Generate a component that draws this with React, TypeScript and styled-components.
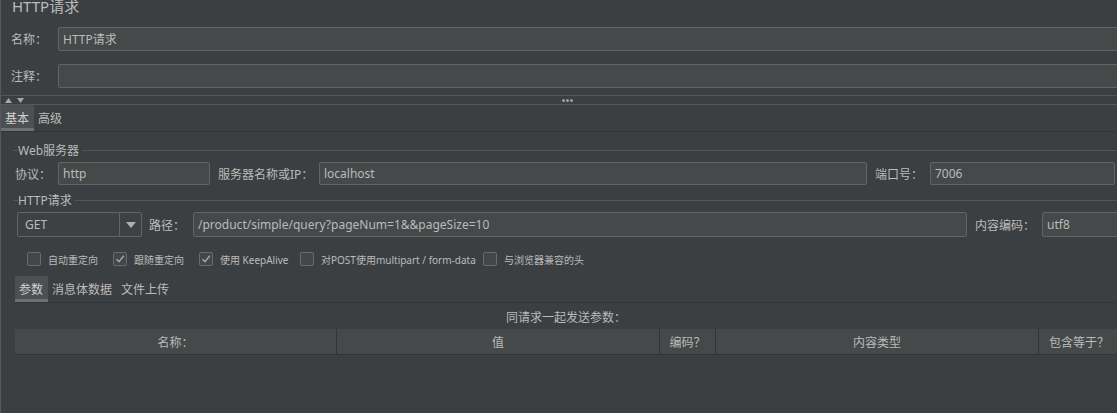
import styled, { createGlobalStyle } from "styled-components";

const GlobalStyle = createGlobalStyle`
  html, body {
    margin: 0;
    padding: 0;
    background: #3c3f41;
    overflow: hidden;
  }
  body {
    font-family: "Noto Sans", "Noto Sans CJK SC", sans-serif;
    font-size: 12px;
    color: #bbbbbb;
  }
  * { box-sizing: border-box; }
`;

const Page = styled.div`
  width: 1117px;
  height: 413px;
  background: #3c3f41;
  border-left: 1px solid #56595b;
  overflow: hidden;
`;

const Title = styled.div`
  margin-top: -2px;
  height: 29px;
  padding-left: 11px;
  font-size: 15px;
  line-height: 16px;
`;

const FormRow = styled.div<{ $mt?: number }>`
  display: flex;
  align-items: center;
  height: 24px;
  margin-top: ${({ $mt }) => $mt ?? 0}px;
  padding-left: 10px;
`;

const Label = styled.span<{ $w: number; $ml?: number }>`
  flex: none;
  width: ${({ $w }) => $w}px;
  margin-left: ${({ $ml }) => $ml ?? 0}px;
  white-space: nowrap;
`;

const Input = styled.div<{ $w?: number; $over?: boolean }>`
  ${({ $w }) => ($w ? `width: ${$w}px; flex: none;` : "flex: 1;")}
  height: 100%;
  margin-right: ${({ $over }) => ($over ? "-6px" : "0")};
  background: #45494a;
  border: 1px solid #646464;
  border-radius: 2px;
  padding: 0 4px;
  display: flex;
  align-items: center;
  white-space: nowrap;
  overflow: hidden;
  color: #bbbbbb;
`;

const Splitter = styled.div`
  margin-top: 7px;
  height: 10px;
  border-top: 1px solid #535658;
  border-bottom: 1px solid #56595b;
  display: grid;
  grid-template-columns: 1fr auto 1fr;
  align-items: center;
`;

const Arrows = styled.div`
  display: flex;
  gap: 5px;
  padding-left: 4px;
`;

const Dots = styled.div`
  display: flex;
  gap: 1px;
  padding-left: 16px;
`;

const Dot = styled.span`
  width: 3px;
  height: 3px;
  border-radius: 50%;
  background: #a0a0a0;
`;

const TabBar = styled.div<{ $ml?: number }>`
  display: flex;
  height: 27px;
  margin-left: ${({ $ml }) => $ml ?? 0}px;
  border-bottom: 1px solid #323436;
`;

const Tab = styled.div<{ $active?: boolean }>`
  height: 100%;
  padding: 2px 5px 0 4px;
  display: flex;
  align-items: center;
  font-size: 12px;
  background: ${({ $active }) => ($active ? "#4c5052" : "transparent")};
  border-bottom: 3px solid ${({ $active }) => ($active ? "#6e7174" : "transparent")};
  color: ${({ $active }) => ($active ? "#cfcfcf" : "#bbbbbb")};
`;

const GroupHead = styled.div<{ $mt: number }>`
  display: flex;
  align-items: center;
  height: 14px;
  margin-top: ${({ $mt }) => $mt}px;
  padding-left: 12px;
`;

const GroupLine = styled.span<{ $w?: number }>`
  height: 1px;
  background: #535658;
  ${({ $w }) => ($w ? `width: ${$w}px; flex: none;` : "flex: 1;")}
`;

const GroupTitle = styled.span`
  padding-right: 3px;
  white-space: nowrap;
`;

const FieldRow = styled.div<{ $h: number; $pl: number }>`
  display: flex;
  align-items: center;
  height: ${({ $h }) => $h}px;
  margin-top: 5px;
  padding-left: ${({ $pl }) => $pl}px;
`;

const Combo = styled.div`
  flex: none;
  width: 125px;
  height: 100%;
  border: 1px solid #646464;
  border-radius: 2px;
  background: #3e4143;
  display: flex;
`;

const ComboValue = styled.div`
  width: 102px;
  padding-left: 7px;
  display: flex;
  align-items: center;
  border-right: 1px solid #646464;
`;

const ComboArrow = styled.div`
  flex: 1;
  display: flex;
  align-items: center;
  justify-content: center;
`;

const CheckRow = styled.div`
  display: flex;
  align-items: center;
  height: 14px;
  margin-top: 15px;
  padding-left: 26px;
`;

const CheckItem = styled.div<{ $w?: number }>`
  flex: none;
  ${({ $w }) => ($w ? `width: ${$w}px;` : "")}
  display: flex;
  align-items: center;
  gap: 7px;
  font-size: 10px;
  white-space: nowrap;
`;

const Box = styled.span`
  flex: none;
  width: 14px;
  height: 14px;
  border: 1px solid #6b6b6b;
  border-radius: 2px;
  background: #43474a;
  display: flex;
  align-items: center;
  justify-content: center;
`;

const InnerTabs = styled(TabBar)`
  margin-top: 10px;
`;

const Caption = styled.div`
  margin-left: 14px;
  height: 26px;
  padding-top: 4px;
  line-height: 22px;
  text-align: center;
`;

const HeaderRow = styled.div`
  display: flex;
  margin-left: 14px;
  height: 26px;
  background: #45494a;
  border-bottom: 1px solid #323436;
`;

const HeaderCell = styled.div<{ $w?: number }>`
  ${({ $w }) => ($w ? `width: ${$w}px; flex: none;` : "flex: 1;")}
  display: flex;
  align-items: center;
  justify-content: center;
  border-right: 1px solid #323436;
  white-space: nowrap;
  &:last-child { border-right: none; justify-content: flex-start; padding-left: 10px; }
`;

const Triangle = ({ up, color = "#a8a8a8" }: { up?: boolean; color?: string }) => (
  <svg width="7" height="5" viewBox="0 0 7 5">
    <path d={up ? "M0 5 L3.5 0 L7 5 Z" : "M0 0 L3.5 5 L7 0 Z"} fill={color} />
  </svg>
);

const Check = () => (
  <svg width="10" height="10" viewBox="0 0 10 10">
    <path d="M1.5 5.2 L4 7.8 L8.8 1.8" fill="none" stroke="#a8a8a8" strokeWidth="1.4" />
  </svg>
);

const checks: { label: string; checked: boolean; w?: number }[] = [
  { label: "自动重定向", checked: false, w: 86 },
  { label: "跟随重定向", checked: true, w: 86 },
  { label: "使用 KeepAlive", checked: true, w: 101 },
  { label: "对POST使用multipart / form-data", checked: false, w: 183 },
  { label: "与浏览器兼容的头", checked: false },
];

export default function App() {
  return (
    <>
      <GlobalStyle />
      <Page>
        <Title>HTTP请求</Title>
        <FormRow>
          <Label $w={47}>名称：</Label>
          <Input $over>HTTP请求</Input>
        </FormRow>
        <FormRow $mt={13}>
          <Label $w={47}>注释：</Label>
          <Input $over />
        </FormRow>

        <Splitter>
          <Arrows>
            <Triangle up />
            <Triangle />
          </Arrows>
          <Dots>
            <Dot />
            <Dot />
            <Dot />
          </Dots>
          <span />
        </Splitter>

        <TabBar>
          <Tab $active>基本</Tab>
          <Tab>高级</Tab>
        </TabBar>

        <GroupHead $mt={11}>
          <GroupLine $w={5} />
          <GroupTitle>Web服务器</GroupTitle>
          <GroupLine />
        </GroupHead>
        <FieldRow $h={23} $pl={14}>
          <Label $w={43}>协议：</Label>
          <Input $w={152}>http</Input>
          <Label $w={101} $ml={8}>服务器名称或IP：</Label>
          <Input $w={548}>localhost</Input>
          <Label $w={55} $ml={8}>端口号：</Label>
          <Input $w={185}>7006</Input>
        </FieldRow>

        <GroupHead $mt={8}>
          <GroupLine $w={5} />
          <GroupTitle>HTTP请求</GroupTitle>
          <GroupLine />
        </GroupHead>
        <FieldRow $h={25} $pl={16}>
          <Combo>
            <ComboValue>GET</ComboValue>
            <ComboArrow>
              <svg width="10" height="6" viewBox="0 0 10 6">
                <path d="M0 0 L5 6 L10 0 Z" fill="#b0b0b0" />
              </svg>
            </ComboArrow>
          </Combo>
          <Label $w={44} $ml={7}>路径：</Label>
          <Input $w={774}>/product/simple/query?pageNum=1&amp;&amp;pageSize=10</Input>
          <Label $w={67} $ml={8}>内容编码：</Label>
          <Input $w={90}>utf8</Input>
        </FieldRow>

        <CheckRow>
          {checks.map((c) => (
            <CheckItem key={c.label} $w={c.w}>
              <Box>{c.checked && <Check />}</Box>
              {c.label}
            </CheckItem>
          ))}
        </CheckRow>

        <InnerTabs $ml={14}>
          <Tab $active>参数</Tab>
          <Tab>消息体数据</Tab>
          <Tab>文件上传</Tab>
        </InnerTabs>

        <Caption>同请求一起发送参数：</Caption>
        <HeaderRow>
          <HeaderCell $w={322}>名称：</HeaderCell>
          <HeaderCell $w={323}>值</HeaderCell>
          <HeaderCell $w={56}>编码？</HeaderCell>
          <HeaderCell $w={323}>内容类型</HeaderCell>
          <HeaderCell>包含等于？</HeaderCell>
        </HeaderRow>
      </Page>
    </>
  );
}
